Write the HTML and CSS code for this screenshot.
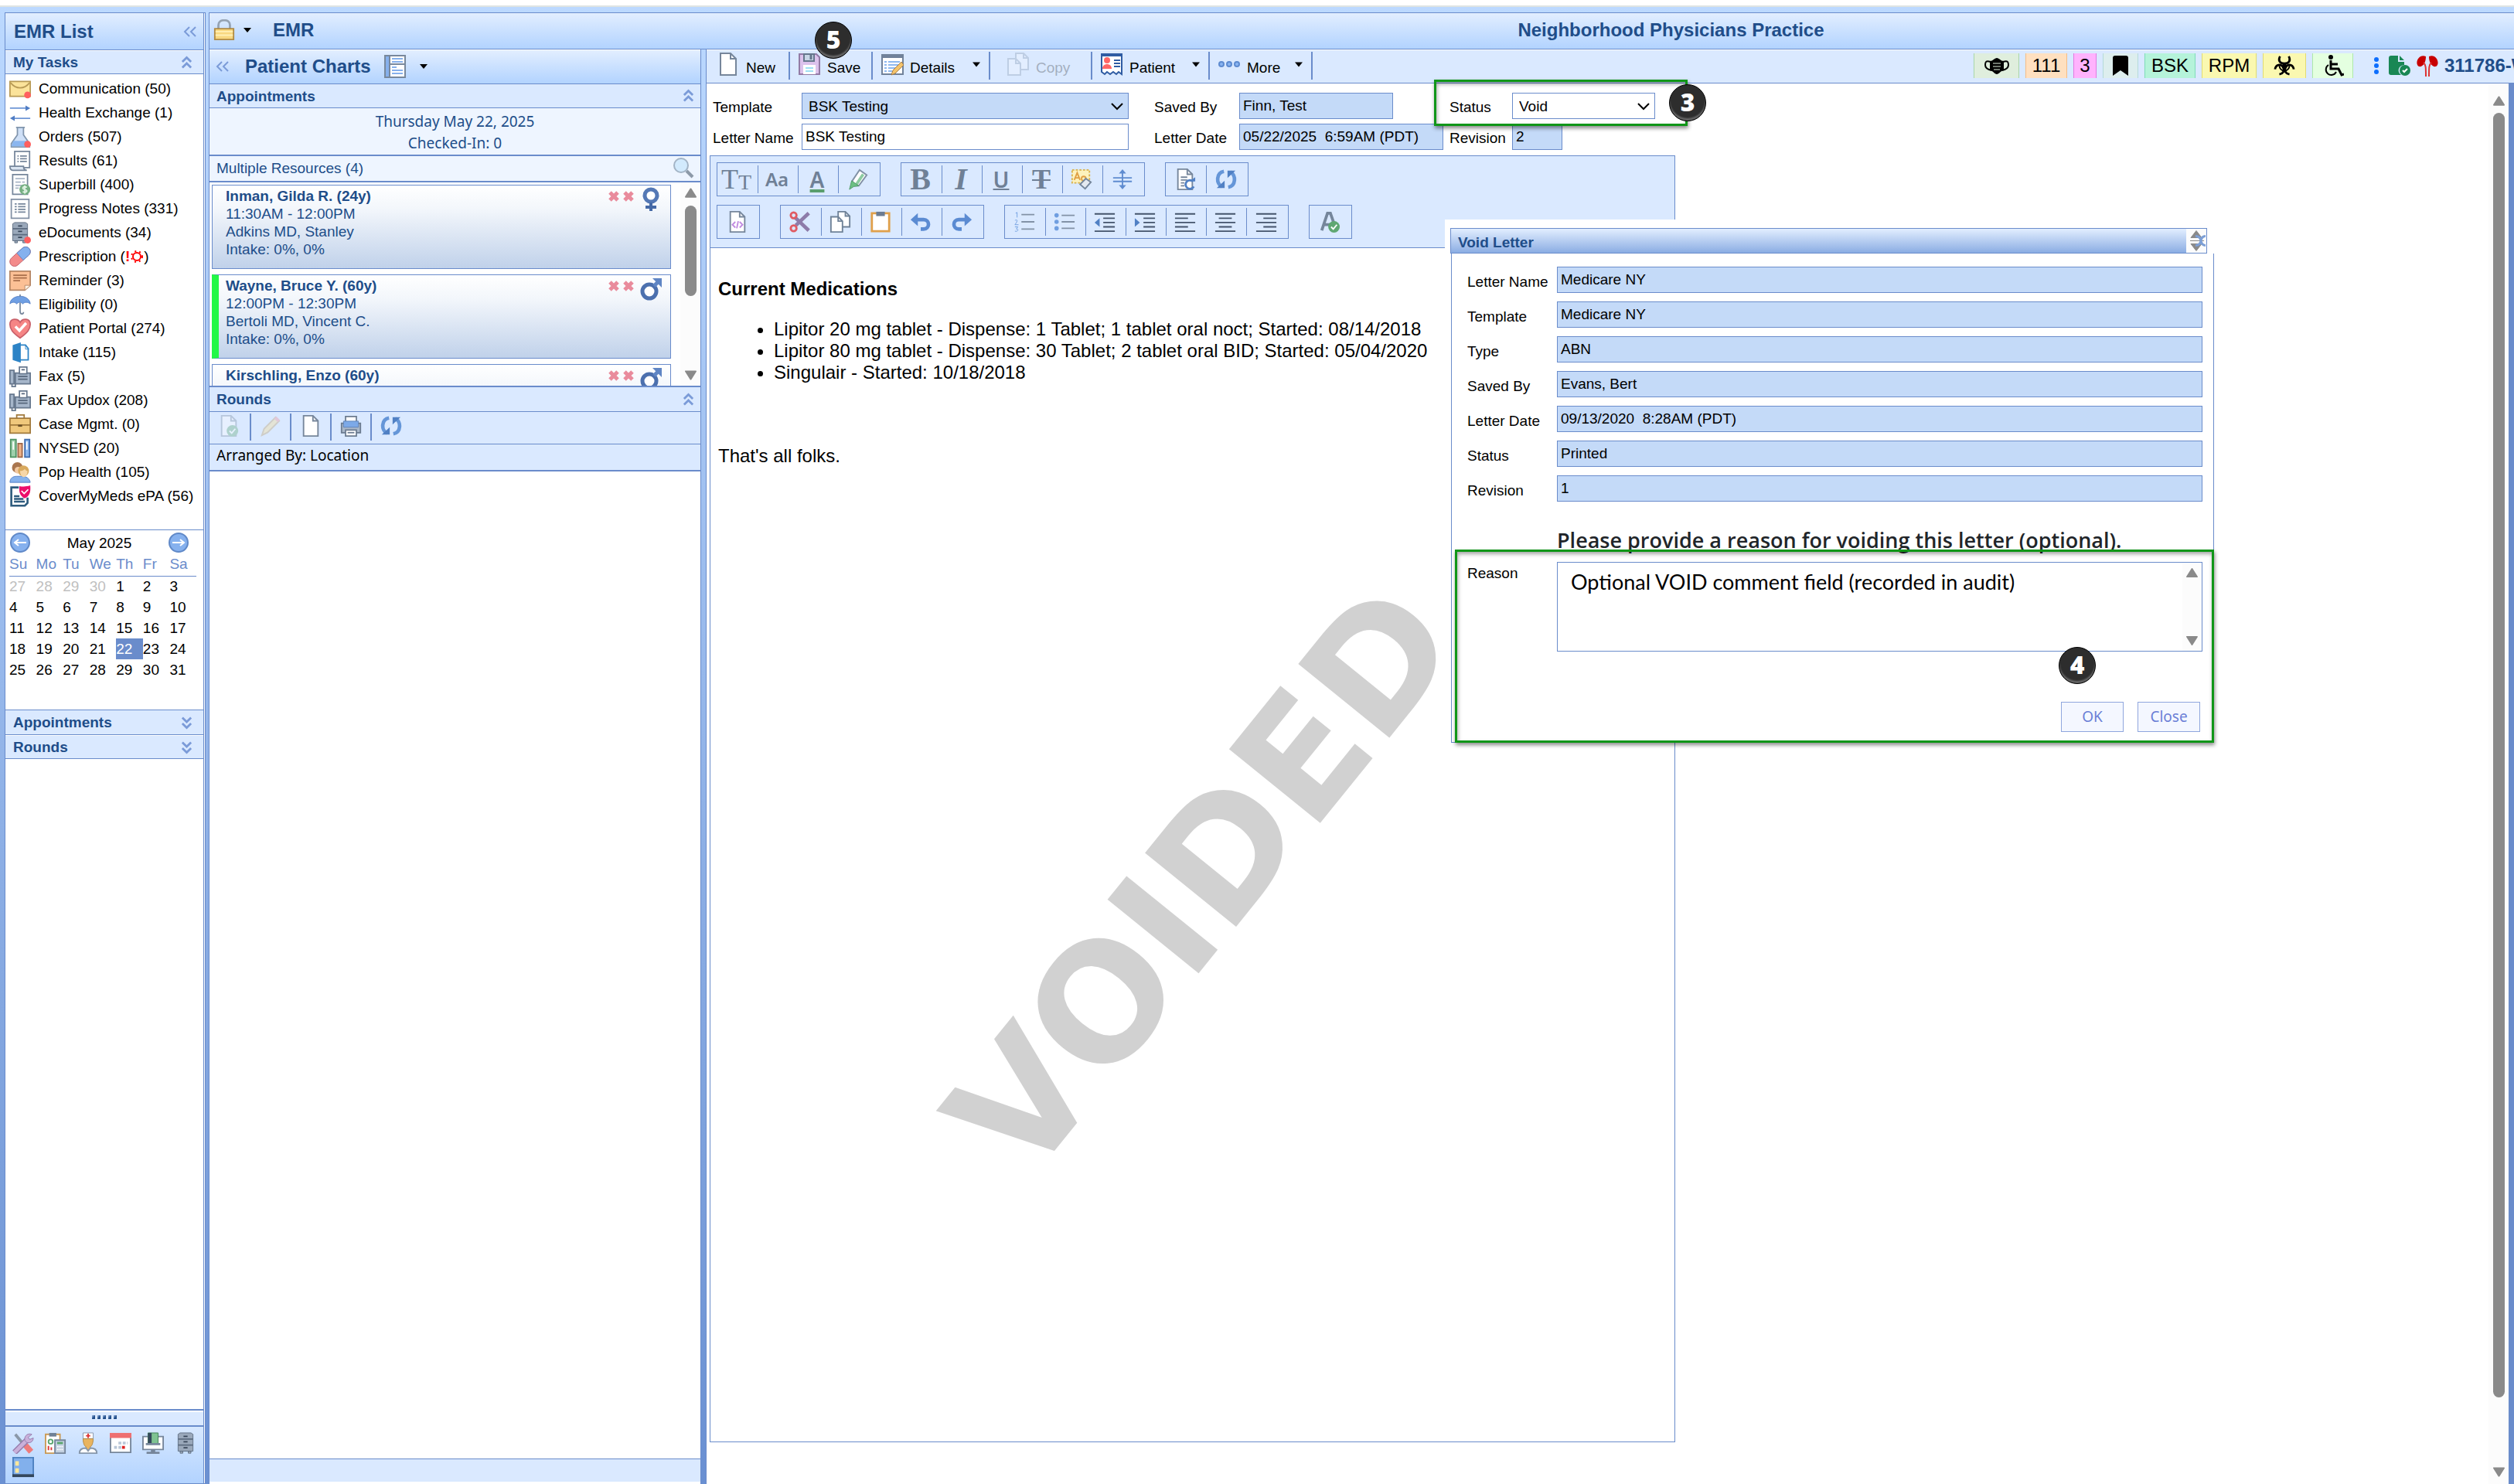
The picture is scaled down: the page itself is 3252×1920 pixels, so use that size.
FILE: index.html
```html
<!DOCTYPE html>
<html lang="en">
<head>
<meta charset="utf-8">
<title>EMR - Neighborhood Physicians Practice</title>
<link rel="stylesheet" href="styles.css">
</head>
<body>
<svg class="sprite" aria-hidden="true">
  <symbol id="mail" viewBox="0 0 32 32"><path d="M1 5h30v22H1z" fill="#fbe39a" stroke="#b89a55" stroke-width="2"/><path d="M2 7c8 10 20 10 28 0" fill="none" stroke="#b89a55" stroke-width="2"/><circle cx="27" cy="25" r="5" fill="#ff5f5f"/></symbol>
  <symbol id="exchange" viewBox="0 0 32 32"><path d="M1 9h26M5 24h26" stroke="#6f97d6" stroke-width="2"/><path d="M24 5l7 4-7 4zM8 20l-7 4 7 4z" fill="#4f7cc4"/></symbol>
  <symbol id="flask" viewBox="0 0 32 32"><path d="M10 2h13M12 2v11L3 26v5h27v-5l-9-13V2z" fill="#cfe0f7" stroke="#8195ad" stroke-width="2"/><path d="M6 22h20l3 8H3z" fill="#8bb6ef"/><circle cx="27" cy="27" r="5" fill="#ff5f5f"/></symbol>
  <symbol id="scroll" viewBox="0 0 32 32"><path d="M8 2h22v24H8z" fill="#fff" stroke="#76869b" stroke-width="2"/><path d="M1 24h20c0 4 2 6 5 6H5c-3 0-4-3-4-6z" fill="#dbe5f1" stroke="#76869b" stroke-width="2"/><path d="M12 9h2m2 0h10M12 13h2m2 0h10M12 17h2m2 0h10" stroke="#76869b" stroke-width="2"/></symbol>
  <symbol id="bill" viewBox="0 0 32 32"><path d="M5 1h22v29H5z" fill="#fff" stroke="#76869b" stroke-width="2"/><path d="M9 7h14M9 12h8m2 0h4M9 17h14M9 21h5" stroke="#a9b6c6" stroke-width="2"/><circle cx="23" cy="23" r="8" fill="#76b083"/><path d="M26 20c-3-2-6-1-6 1s6 2 6 4-4 3-6 1M23 17v12" fill="none" stroke="#e3f4e6" stroke-width="2"/></symbol>
  <symbol id="note" viewBox="0 0 32 32"><path d="M3 2h26v28H3z" fill="#fff" stroke="#8391a5" stroke-width="2"/><path d="M8 9h3m2 0h11M8 13h3m2 0h11M8 17h3m2 0h11M8 21h3m2 0h11" stroke="#76869b" stroke-width="2"/></symbol>
  <symbol id="cabinet" viewBox="0 0 32 32"><path d="M5 3l3-2h16l3 2v25H5zM8 28h4v3H8zm12 0h4v3h-4z" fill="#9aa8ba" stroke="#5c6b7f"/><path d="M5 10h22M5 19h22" stroke="#5c6b7f" stroke-width="2"/><path d="M13 6h6M13 14h6M13 23h6" stroke="#38465a" stroke-width="2"/></symbol>
  <symbol id="cabinet-new" viewBox="0 0 32 32"><use href="#cabinet"/><circle cx="27" cy="27" r="5" fill="#ff5f5f"/></symbol>
  <symbol id="pill" viewBox="0 0 32 32"><g transform="rotate(-42 16 16)"><rect x="-2" y="9" width="36" height="14" rx="7" fill="#f38b8b" stroke="#c05f6a"/><path d="M16 9h11a7 7 0 0 1 0 14H16z" fill="#84b1ee" stroke="#5b86c7"/></g></symbol>
  <symbol id="memo" viewBox="0 0 32 32"><path d="M1 2h30v21l-8 7H1z" fill="#fcc095" stroke="#b58665" stroke-width="2"/><path d="M6 8h20M6 12h20M6 16h10" stroke="#a96f4b" stroke-width="2"/><path d="M31 23h-8v7" fill="#fff0e0" stroke="#b58665"/></symbol>
  <symbol id="umbrella" viewBox="0 0 32 32"><path d="M1 15C2 0 30 0 31 15c-4-3-8-3-11 0-3-3-6-3-9 0-3-3-7-3-10 0z" fill="#6f9fe3" stroke="#4f7cc4"/><path d="M16 13v13c0 5 5 5 5 1M16 1v3" fill="none" stroke="#76869b" stroke-width="2"/></symbol>
  <symbol id="heart" viewBox="0 0 32 32"><path d="M16 30C5 22 1 17 1 10 1 1 12 0 16 7c4-7 15-6 15 3 0 7-4 12-15 20z" fill="#f58585" stroke="#c9606a" stroke-width="2"/><path d="M9 13l6 6 10-11" fill="none" stroke="#fff" stroke-width="4"/></symbol>
  <symbol id="door" viewBox="0 0 32 32"><path d="M14 5h10l4 5v17H14z" fill="#fff" stroke="#2c83c6" stroke-width="2"/><path d="M5 5l12-4v30L5 27z" fill="#2c83c6"/><path d="M24 5v6h5" fill="none" stroke="#2c83c6"/></symbol>
  <symbol id="fax" viewBox="0 0 32 32"><path d="M1 7h6v20H1zM9 11h22v16H9z" fill="#a6b6ca" stroke="#67788e" stroke-width="2"/><path d="M15 2h11v10H15z" fill="#fff" stroke="#67788e" stroke-width="2"/><path d="M18 6h5M13 16h14M13 20h14" stroke="#57677c" stroke-width="2"/><path d="M4 27v4h5v-5" fill="none" stroke="#67788e" stroke-width="2"/></symbol>
  <symbol id="case" viewBox="0 0 32 32"><path d="M1 7h30v22H1z" fill="#f0c87c" stroke="#a17a3d" stroke-width="2"/><path d="M11 7V2h11v5M1 17h30" fill="none" stroke="#a17a3d" stroke-width="2"/><path d="M13 18h6" stroke="#6c5026" stroke-width="3"/></symbol>
  <symbol id="books" viewBox="0 0 32 32"><path d="M2 3h8v26H2z" fill="#9ed0ac" stroke="#4c9262" stroke-width="2"/><path d="M13 9h6v20h-6z" fill="#efb289" stroke="#9d6749" stroke-width="2"/><path d="M23 3h7v26h-7z" fill="#8bb6ef" stroke="#3f6cae" stroke-width="2"/><path d="M6 6v12M26 6v12" stroke="#fff" stroke-width="2"/></symbol>
  <symbol id="people" viewBox="0 0 32 32"><path d="M1 31c0-6 4-9 10-9h8c6 0 11 3 12 9z" fill="#86b2ec" stroke="#4f7cc4"/><circle cx="12" cy="9" r="8" fill="#a9764f"/><circle cx="13" cy="13" r="5" fill="#f2c9a2"/><circle cx="21" cy="14" r="8" fill="#d8a95e"/><path d="M16 14c3 0 5-1 7-3 1 2 3 3 4 3 0 12-11 12-11 0z" fill="#f7d7a8"/></symbol>
  <symbol id="cover" viewBox="0 0 32 32"><path d="M14 3H3v27h20l4-4v-8" fill="#fff" stroke="#2e5b7d" stroke-width="3"/><path d="M7 16h8M7 20h14M7 24h16" stroke="#2e5b7d" stroke-width="3"/><path d="M15 1c5 1 10 1 16-1 1 10-1 16-8 19-7-3-9-9-8-18z" fill="#ec0f6b"/><path d="M18 8l4 4 6-6" fill="none" stroke="#fff" stroke-width="2"/></symbol>
  <symbol id="arrow-l" viewBox="0 0 28 28"><circle cx="14" cy="14" r="12" fill="#86b1ee" stroke="#6089c8" stroke-width="2"/><path d="M22 14H8m4-4l-5 4 5 4" fill="none" stroke="#fff" stroke-width="2"/></symbol>
  <symbol id="arrow-r" viewBox="0 0 28 28"><circle cx="14" cy="14" r="12" fill="#86b1ee" stroke="#6089c8" stroke-width="2"/><path d="M6 14h14m-4-4l5 4-5 4" fill="none" stroke="#fff" stroke-width="2"/></symbol>
  <symbol id="up2" viewBox="0 0 16 18"><path d="M2 8l6-6 6 6M2 16l6-6 6 6" fill="none" stroke="#7b9bd8" stroke-width="3"/></symbol>
  <symbol id="down2" viewBox="0 0 16 18"><path d="M2 2l6 6 6-6M2 10l6 6 6-6" fill="none" stroke="#7b9bd8" stroke-width="3"/></symbol>
  <symbol id="left2" viewBox="0 0 18 16"><path d="M8 2L2 8l6 6M16 2l-6 6 6 6" fill="none" stroke="#7b9bd8" stroke-width="2"/></symbol>
  <symbol id="lock" viewBox="0 0 28 30"><path d="M6 13V8c0-9 16-9 16 0v5" fill="none" stroke="#95a3b3" stroke-width="3"/><path d="M1 13h26v15H1z" fill="#f8d880" stroke="#b08b45" stroke-width="2"/><path d="M2 17h24M2 22h24" stroke="#fff0b5" stroke-width="2"/></symbol>
  <symbol id="chart" viewBox="0 0 30 30"><path d="M2 1h26v28H2z" fill="#fff" stroke="#78889c" stroke-width="2"/><path d="M3 2h5v26H3z" fill="#86b0ec"/><path d="M8 1v28M8 12h20" stroke="#78889c" stroke-width="2"/><path d="M11 5h14M11 9h14M11 16h6M11 20h14M11 24h14" stroke="#86b0ec" stroke-width="2"/></symbol>
  <symbol id="caret" viewBox="0 0 10 6"><path d="M0 0h10L5 6z" fill="#000"/></symbol>
  <symbol id="chevron" viewBox="0 0 16 10"><path d="M1 1l7 7 7-7" fill="none" stroke="#000" stroke-width="2"/></symbol>
  <symbol id="tri-up" viewBox="0 0 16 14"><path d="M8 1L1 12h14z" fill="#8a8a8a" stroke="#8a8a8a" stroke-width="2" stroke-linejoin="round"/></symbol>
  <symbol id="tri-down" viewBox="0 0 16 14"><path d="M8 13L1 2h14z" fill="#8a8a8a" stroke="#8a8a8a" stroke-width="2" stroke-linejoin="round"/></symbol>
  <symbol id="search" viewBox="0 0 28 28"><path d="M18 18l8 8" stroke="#8d9aa8" stroke-width="4"/><circle cx="11" cy="11" r="9" fill="#d2eafd" stroke="#a3b4c6" stroke-width="2"/></symbol>
  <symbol id="x-red" viewBox="0 0 16 16"><path d="M3 3l10 10M13 3L3 13" stroke="#e98b9c" stroke-width="5"/></symbol>
  <symbol id="female" viewBox="0 0 28 32"><circle cx="14" cy="11" r="8" fill="#fff" stroke="#5478b5" stroke-width="5"/><path d="M14 20v11M7 26h14" stroke="#4569a6" stroke-width="4"/></symbol>
  <symbol id="male" viewBox="0 0 28 32"><circle cx="12" cy="19" r="9" fill="#fff" stroke="#4c70ae" stroke-width="5"/><path d="M18 12l6-6" stroke="#5f85c4" stroke-width="5"/><path d="M16 2h12v12z" fill="#5f85c4"/></symbol>
  <symbol id="page" viewBox="0 0 30 30"><path d="M5 1h13l7 7v21H5z" fill="#fff" stroke="#76869b" stroke-width="2"/><path d="M18 1v7h7" fill="none" stroke="#76869b" stroke-width="2"/></symbol>
  <symbol id="page-ok" viewBox="0 0 30 30"><use href="#page"/><circle cx="20" cy="22" r="8" fill="#5fa772"/><path d="M16 22l3 3 5-6" fill="none" stroke="#fff" stroke-width="2"/></symbol>
  <symbol id="pencil" viewBox="0 0 30 30"><path d="M3 28l3-9L22 3l5 5-16 16z" fill="#f7dc8b" stroke="#b99b63" stroke-width="2"/><path d="M20 5l3-3 5 5-3 3z" fill="#ee8c97"/></symbol>
  <symbol id="printer" viewBox="0 0 32 32"><path d="M2 12h28v14H2z" fill="#a9b7c8" stroke="#6b7b8f" stroke-width="2"/><path d="M8 2h16v10H8z" fill="#fff" stroke="#6b7b8f" stroke-width="2"/><path d="M5 9h22v9H5z" fill="#7ca9e8" stroke="#5b7fb5"/><path d="M8 22h16v9H8z" fill="#fff" stroke="#6b7b8f" stroke-width="2"/><path d="M11 26h10" stroke="#6b7b8f" stroke-width="2"/></symbol>
  <symbol id="refresh" viewBox="0 0 30 30"><path d="M12 4C1 6 1 21 9 25M18 26c11-2 11-17 3-21" fill="none" stroke="#6596d8" stroke-width="5"/><path d="M2 27h11V17zM28 3H17v10z" fill="#5080c4"/></symbol>
  <symbol id="disk" viewBox="0 0 30 30"><path d="M2 2h22l4 4v22H2z" fill="#dcc2ec" stroke="#927ba5" stroke-width="2"/><path d="M8 2h13v9H8z" fill="#c8d6e6" stroke="#66778c" stroke-width="2"/><path d="M17 3v6" stroke="#66778c" stroke-width="3"/><path d="M7 16h16v12H7z" fill="#fff"/><path d="M10 20h10M10 24h10" stroke="#9fe0f4" stroke-width="2"/></symbol>
  <symbol id="details" viewBox="0 0 30 30"><path d="M2 3h27v25H2z" fill="#fff" stroke="#71829a" stroke-width="2"/><path d="M1 2h29v5H1z" fill="#71829a"/><path d="M5 12h3m2 0h15M5 16h3m2 0h15M5 20h3m2 0h10M5 24h3m2 0h5" stroke="#8fb9f0" stroke-width="2"/><path d="M14 29l2-6 11-11 3 4-11 11z" fill="#f4c46b" stroke="#a57c4a"/></symbol>
  <symbol id="copy" viewBox="0 0 30 30"><path d="M12 1h10l6 6v15H12z" fill="#fff" stroke="#6f8298" stroke-width="2"/><path d="M2 8h10l6 6v15H2z" fill="#fff" stroke="#6f8298" stroke-width="2"/><path d="M22 1v6h6M12 8v6h6" fill="none" stroke="#6f8298" stroke-width="2"/></symbol>
  <symbol id="patient" viewBox="0 0 30 30"><path d="M2 3h26v25l-4-3-3 3-4-3-4 3-4-3-3 3-4-3z" fill="#fff" stroke="#2f5ca3" stroke-width="2"/><path d="M1 3h28" stroke="#2f5ca3" stroke-width="4"/><circle cx="9" cy="10" r="4" fill="#f66"/><path d="M3 21c0-8 12-8 12 0z" fill="#f66"/><path d="M18 10h8M18 14h8M18 18h8" stroke="#2f5ca3" stroke-width="2"/></symbol>
  <symbol id="dots" viewBox="0 0 30 30"><g fill="#8ab5f2" stroke="#5e8bd0" stroke-width="2"><circle cx="5" cy="15" r="3"/><circle cx="15" cy="15" r="3"/><circle cx="25" cy="15" r="3"/></g></symbol>
  <symbol id="mask" viewBox="0 0 32 24"><path d="M7 6c4 0 6-4 9-4s5 4 9 4v12c-5 1-6 5-9 5s-4-4-9-5z"/><path d="M8 7C2 5 1 7 1 11s3 6 8 7M24 7c6-2 7 0 7 4s-3 6-8 7" fill="none" stroke="#000" stroke-width="2"/><path d="M11 9h10M11 13h10M12 17h8" stroke="#dfeedd" stroke-width="1"/></symbol>
  <symbol id="bookmark" viewBox="0 0 20 26"><path d="M0 3q0-3 3-3h14q3 0 3 3v23l-10-7-10 7z"/></symbol>
  <symbol id="biohazard" viewBox="0 0 30 28"><g fill="none" stroke="#000" stroke-width="3"><path d="M9 1c-3 5-1 10 6 10s9-5 6-10"/><path d="M2 19c1-7 8-8 11-3s0 9-5 10"/><path d="M28 19c-1-7-8-8-11-3s0 9 5 10"/></g><circle cx="15" cy="14" r="3"/><path d="M8 14a7 7 0 0 0 14 0" fill="none" stroke="#000" stroke-width="2"/></symbol>
  <symbol id="wheelchair" viewBox="0 0 28 28"><circle cx="11" cy="3" r="3"/><path d="M11 7v11h10l4 8 3-1M11 12h9" fill="none" stroke="#000" stroke-width="3"/><path d="M8 13a7 7 0 1 0 10 9" fill="none" stroke="#000" stroke-width="2"/></symbol>
  <symbol id="doc-ok" viewBox="0 0 28 28"><path d="M3 1h9v8h8v4c-9 1-9 10-4 13H3q-3 0-3-3V4q0-3 3-3zM14 1l6 6h-6z" fill="#198754"/><circle cx="21" cy="20" r="7" fill="#198754"/><path d="M18 20l2 2 4-4" fill="none" stroke="#fff" stroke-width="2"/></symbol>
  <symbol id="kidneys" viewBox="0 0 28 28"><path d="M12 2C2-2-3 12 3 15c4 1 9-3 9-13zM16 2c10-4 15 10 9 13-4 1-9-3-9-13z" fill="#c80000"/><path d="M9 10c3 3 3 6 3 18M19 10c-3 3-3 6-3 18" fill="none" stroke="#d33" stroke-width="2"/></symbol>
  <symbol id="marker" viewBox="0 0 30 30"><path d="M7 17L17 2l10 7-11 15H8z" fill="#fff" stroke="#8191a5" stroke-width="2"/><path d="M12 23L22 8" stroke="#8ccba0" stroke-width="4"/><path d="M6 17l10 7-7 1-6 4z" fill="#6cc083" stroke="#4f9a67"/></symbol>
  <symbol id="clearfmt" viewBox="0 0 30 30"><path d="M2 2h24v18H2z" fill="#fdf2bd" stroke="#d9b24d" stroke-width="2" stroke-dasharray="3 2"/><path d="M5 16l4-10 4 10M6 13h6" fill="none" stroke="#e0a045" stroke-width="2"/><circle cx="18" cy="14" r="3" fill="none" stroke="#e0a045" stroke-width="2"/><path d="M13 22l8-8 7 5-8 9z" fill="#e4e9f0" stroke="#75869b" stroke-width="2"/></symbol>
  <symbol id="vspace" viewBox="0 0 30 30"><path d="M2 13h26M2 18h26M15 4v22" stroke="#5f8cd0" stroke-width="2"/><path d="M10 7l5-6 5 6zM10 23l5 6 5-6z" fill="#5f8cd0"/></symbol>
  <symbol id="page-sync" viewBox="0 0 30 30"><use href="#page"/><path d="M9 12h9M9 16h9M9 20h5M9 24h5" stroke="#76869b" stroke-width="2"/><path d="M26 18a6 6 0 1 0 1 7" fill="none" stroke="#5080c4" stroke-width="3"/><path d="M21 18h8v-6z" fill="#5080c4"/></symbol>
  <symbol id="page-code" viewBox="0 0 30 30"><use href="#page"/><path d="M12 15l-4 4 4 4M18 15l4 4-4 4M16 14l-2 10" fill="none" stroke="#c08be0" stroke-width="2"/></symbol>
  <symbol id="cut" viewBox="0 0 30 30"><path d="M27 3L9 20M27 27L8 9" stroke="#8d7ba9" stroke-width="5"/><circle cx="6" cy="6" r="4" fill="none" stroke="#e05a62" stroke-width="3"/><circle cx="6" cy="24" r="4" fill="none" stroke="#e05a62" stroke-width="3"/></symbol>
  <symbol id="paste" viewBox="0 0 30 30"><path d="M3 3h24v25H3z" fill="#fff" stroke="#e0a04a" stroke-width="3"/><path d="M9 1h12v6H9z" fill="#6b7c92"/></symbol>
  <symbol id="undo" viewBox="0 0 30 30"><path d="M6 12h13c9 0 9 13 0 13h-4" fill="none" stroke="#5b8bd2" stroke-width="5"/><path d="M11 3v18L1 12z" fill="#5b8bd2"/></symbol>
  <symbol id="redo" viewBox="0 0 30 30"><path d="M24 12H11c-9 0-9 13 0 13h4" fill="none" stroke="#5b8bd2" stroke-width="5"/><path d="M19 3v18l10-9z" fill="#5b8bd2"/></symbol>
  <symbol id="ol" viewBox="0 0 30 30"><path d="M11 5h18M11 15h18M11 25h18" stroke="#8292a6" stroke-width="2"/><path d="M3 3l2-1v7M2 13c4-2 4 1 0 6h5M2 22h4l-2 3c4 0 2 4-2 3" fill="none" stroke="#6f9ee0" stroke-width="1"/></symbol>
  <symbol id="ul" viewBox="0 0 30 30"><path d="M11 6h18M11 15h18M11 24h18" stroke="#8292a6" stroke-width="2"/><g fill="#6f9ee0"><circle cx="4" cy="6" r="3"/><circle cx="4" cy="15" r="3"/><circle cx="4" cy="24" r="3"/></g></symbol>
  <symbol id="outdent" viewBox="0 0 30 30"><path d="M1 4h28M13 10h16M13 16h16M13 22h16M1 28h28" stroke="#44546b" stroke-width="2"/><path d="M8 10v12l-7-6z" fill="#5080c4"/></symbol>
  <symbol id="indent" viewBox="0 0 30 30"><path d="M1 4h28M13 10h16M13 16h16M13 22h16M1 28h28" stroke="#44546b" stroke-width="2"/><path d="M1 10v12l7-6z" fill="#5080c4"/></symbol>
  <symbol id="al-left" viewBox="0 0 30 30"><path d="M1 4h28M1 10h18M1 16h28M1 22h18M1 28h28" stroke="#44546b" stroke-width="2"/></symbol>
  <symbol id="al-center" viewBox="0 0 30 30"><path d="M1 4h28M6 10h18M1 16h28M6 22h18M1 28h28" stroke="#44546b" stroke-width="2"/></symbol>
  <symbol id="al-right" viewBox="0 0 30 30"><path d="M1 4h28M11 10h18M1 16h28M11 22h18M1 28h28" stroke="#44546b" stroke-width="2"/></symbol>
  <symbol id="spell" viewBox="0 0 30 30"><path d="M4 27L12 3h4l7 20M8 19h10" fill="none" stroke="#75869b" stroke-width="4"/><circle cx="21" cy="22" r="8" fill="#5fa772"/><path d="M17 22l3 3 5-6" fill="none" stroke="#fff" stroke-width="2"/></symbol>
  <symbol id="tools" viewBox="0 0 30 30"><path d="M4 3l20 24" stroke="#8a98a8" stroke-width="4"/><path d="M18 18l8 9" stroke="#ee7b7b" stroke-width="8"/><path d="M3 28L20 11" stroke="#957aab" stroke-width="8"/><path d="M3 28L20 11" stroke="#c9b0da" stroke-width="5"/><path d="M27 3l-5 4 2 3 5-2c0 8-11 9-12 2 0-6 5-9 10-7z" fill="#c9b0da" stroke="#957aab"/></symbol>
  <symbol id="calc" viewBox="0 0 30 30"><path d="M1 3h20v26H1z" fill="#fff" stroke="#c99a55" stroke-width="2"/><path d="M6 1h10v5H6z" fill="#6f8095"/><circle cx="8" cy="13" r="3" fill="none" stroke="#5aa56e" stroke-width="2"/><path d="M5 19v6M9 21v4" stroke="#d33" stroke-width="2"/><path d="M14 11h14v18H14z" fill="#c3d0e0" stroke="#76869b" stroke-width="2"/><path d="M17 15h8" stroke="#5aa56e" stroke-width="3"/><path d="M17 20h8M17 24h8" stroke="#fff" stroke-width="2" stroke-dasharray="2 1"/></symbol>
  <symbol id="nurse" viewBox="0 0 30 30"><path d="M8 1h14v8H8z" fill="#fff" stroke="#8797ab"/><path d="M15 2v6M12 5h6" stroke="#d33" stroke-width="2"/><path d="M8 9h14c0 8-3 11-4 11v5h-6v-5c-1 0-4-3-4-11z" fill="#e9b45f" stroke="#b28842"/><path d="M3 29c0-6 5-7 9-7l3 4 3-4c4 0 9 1 9 7z" fill="#fff" stroke="#8797ab" stroke-width="2"/></symbol>
  <symbol id="calendar" viewBox="0 0 30 30"><path d="M1 2h28v26H1z" fill="#fff" stroke="#76869b" stroke-width="2"/><path d="M0 1h30v7H0z" fill="#ee6f70"/><path d="M12 15h13M6 21h10" stroke="#b8c6d8" stroke-width="4" stroke-dasharray="4 2"/><path d="M17 19h4v4h-4z" fill="#d22"/></symbol>
  <symbol id="monitor" viewBox="0 0 30 30"><path d="M1 6h28v18H1z" fill="#fff" stroke="#76869b" stroke-width="2"/><path d="M8 1h14v15H8z" fill="#7fc392" stroke="#3d7f54"/><path d="M8 1h5v15H8z" fill="#34485a"/><path d="M5 15h20v3H5zM12 24h6v3h6v3H6v-3h6z" fill="#76869b"/></symbol>
  <symbol id="server" viewBox="0 0 30 30"><path d="M1 2h28v26H1z" fill="#82b0ec" stroke="#4d81c0" stroke-width="2"/><path d="M4 7h5v6H4zM4 17h5v6H4z" fill="#ffe79a"/><path d="M0 25h30v4H0z" fill="#33475c"/></symbol>
</svg>

<div class="top-strip"></div>
<div class="shell">
  <nav class="sidebar" aria-label="EMR List">
    <header class="title-bar side-title"><h2>EMR List</h2><svg class="chev-l"><use href="#left2"/></svg></header>
    <section class="side-bar"><h3>My Tasks</h3><svg class="chev"><use href="#up2"/></svg></section>
    <ul class="tasks">
      <li><a href="#"><svg><use href="#mail"/></svg>Communication (50)</a></li>
      <li><a href="#"><svg><use href="#exchange"/></svg>Health Exchange (1)</a></li>
      <li><a href="#"><svg><use href="#flask"/></svg>Orders (507)</a></li>
      <li><a href="#"><svg><use href="#scroll"/></svg>Results (61)</a></li>
      <li><a href="#"><svg><use href="#bill"/></svg>Superbill (400)</a></li>
      <li><a href="#"><svg><use href="#note"/></svg>Progress Notes (331)</a></li>
      <li><a href="#"><svg><use href="#cabinet-new"/></svg>eDocuments (34)</a></li>
      <li><a href="#"><svg><use href="#pill"/></svg>Prescription (<b class="alert">!</b><svg class="gear" viewBox="0 0 18 18"><circle cx="9" cy="9" r="5" fill="none" stroke="red" stroke-width="2"/><circle cx="9" cy="9" r="7" fill="none" stroke="red" stroke-width="2" stroke-dasharray="2 4"/></svg>)</a></li>
      <li><a href="#"><svg><use href="#memo"/></svg>Reminder (3)</a></li>
      <li><a href="#"><svg><use href="#umbrella"/></svg>Eligibility (0)</a></li>
      <li><a href="#"><svg><use href="#heart"/></svg>Patient Portal (274)</a></li>
      <li><a href="#"><svg><use href="#door"/></svg>Intake (115)</a></li>
      <li><a href="#"><svg><use href="#fax"/></svg>Fax (5)</a></li>
      <li><a href="#"><svg><use href="#fax"/></svg>Fax Updox (208)</a></li>
      <li><a href="#"><svg><use href="#case"/></svg>Case Mgmt. (0)</a></li>
      <li><a href="#"><svg><use href="#books"/></svg>NYSED (20)</a></li>
      <li><a href="#"><svg><use href="#people"/></svg>Pop Health (105)</a></li>
      <li><a href="#"><svg><use href="#cover"/></svg>CoverMyMeds ePA (56)</a></li>
    </ul>
    <section class="calendar">
      <div class="month">
        <button type="button" aria-label="Previous month"><svg><use href="#arrow-l"/></svg></button>
        <span>May 2025</span>
        <button type="button" aria-label="Next month"><svg><use href="#arrow-r"/></svg></button>
      </div>
      <table>
        <thead><tr><th>Su</th><th>Mo</th><th>Tu</th><th>We</th><th>Th</th><th>Fr</th><th>Sa</th></tr></thead>
        <tbody>
          <tr><td class="off">27</td><td class="off">28</td><td class="off">29</td><td class="off">30</td><td>1</td><td>2</td><td>3</td></tr>
          <tr><td>4</td><td>5</td><td>6</td><td>7</td><td>8</td><td>9</td><td>10</td></tr>
          <tr><td>11</td><td>12</td><td>13</td><td>14</td><td>15</td><td>16</td><td>17</td></tr>
          <tr><td>18</td><td>19</td><td>20</td><td>21</td><td class="today">22</td><td>23</td><td>24</td></tr>
          <tr><td>25</td><td>26</td><td>27</td><td>28</td><td>29</td><td>30</td><td>31</td></tr>
        </tbody>
      </table>
    </section>
    <section class="side-bar folded"><h3>Appointments</h3><svg class="chev"><use href="#down2"/></svg></section>
    <section class="side-bar"><h3>Rounds</h3><svg class="chev"><use href="#down2"/></svg></section>
    <footer class="side-foot">
      <div class="grip"><i></i><i></i><i></i><i></i><i></i></div>
      <div class="launch">
        <button type="button" aria-label="Tools"><svg><use href="#tools"/></svg></button>
        <button type="button" aria-label="Billing"><svg><use href="#calc"/></svg></button>
        <button type="button" aria-label="Clinical"><svg><use href="#nurse"/></svg></button>
        <button type="button" aria-label="Calendar"><svg><use href="#calendar"/></svg></button>
        <button type="button" aria-label="Reports"><svg><use href="#monitor"/></svg></button>
        <button type="button" aria-label="Files"><svg><use href="#cabinet"/></svg></button>
        <button type="button" aria-label="System"><svg><use href="#server"/></svg></button>
      </div>
    </footer>
  </nav>

  <main class="main">
    <header class="title-bar main-title">
      <div class="module"><svg class="lock"><use href="#lock"/></svg><svg class="caret"><use href="#caret"/></svg><h1>EMR</h1></div>
      <h1 class="practice">Neighborhood Physicians Practice</h1>
    </header>
    <div class="columns">
      <aside class="charts">
        <header class="title-bar charts-title"><svg class="chev-l"><use href="#left2"/></svg><h2>Patient Charts</h2><svg class="chart-icon"><use href="#chart"/></svg><svg class="caret"><use href="#caret"/></svg></header>
        <section class="pane-bar"><h3>Appointments</h3><svg class="chev"><use href="#up2"/></svg></section>
        <div class="day"><span>Thursday May 22, 2025</span><span>Checked-In: 0</span></div>
        <div class="resources"><span>Multiple Resources (4)</span><svg><use href="#search"/></svg></div>
        <div class="visits">
          <div class="cards">
            <article class="card">
              <p><b>Inman, Gilda R. (24y)</b><br>11:30AM - 12:00PM<br>Adkins MD, Stanley<br>Intake: 0%, 0%</p>
              <div class="flags"><svg class="x"><use href="#x-red"/></svg><svg class="x"><use href="#x-red"/></svg><svg class="sex"><use href="#female"/></svg></div>
            </article>
            <article class="card here">
              <p><b>Wayne, Bruce Y. (60y)</b><br>12:00PM - 12:30PM<br>Bertoli MD, Vincent C.<br>Intake: 0%, 0%</p>
              <div class="flags"><svg class="x"><use href="#x-red"/></svg><svg class="x"><use href="#x-red"/></svg><svg class="sex"><use href="#male"/></svg></div>
            </article>
            <article class="card">
              <p><b>Kirschling, Enzo (60y)</b></p>
              <div class="flags"><svg class="x"><use href="#x-red"/></svg><svg class="x"><use href="#x-red"/></svg><svg class="sex"><use href="#male"/></svg></div>
            </article>
          </div>
          <div class="scroll list-scroll"><svg><use href="#tri-up"/></svg><i class="thumb"></i><svg class="end"><use href="#tri-down"/></svg></div>
        </div>
        <section class="pane-bar rounds-bar"><h3>Rounds</h3><svg class="chev"><use href="#up2"/></svg></section>
        <div class="rounds-tools">
          <button type="button" disabled aria-label="Complete"><svg><use href="#page-ok"/></svg></button>
          <button type="button" disabled aria-label="Edit"><svg><use href="#pencil"/></svg></button>
          <button type="button" aria-label="New"><svg><use href="#page"/></svg></button>
          <button type="button" aria-label="Print"><svg><use href="#printer"/></svg></button>
          <button type="button" aria-label="Refresh"><svg><use href="#refresh"/></svg></button>
        </div>
        <div class="arranged">Arranged By: Location</div>
        <div class="charts-foot"></div>
      </aside>

      <section class="letter">
        <div class="toolbar">
          <button type="button" class="w-new"><svg><use href="#page"/></svg><span>New</span></button>
          <button type="button" class="w-save"><svg><use href="#disk"/></svg><span>Save</span></button>
          <button type="button" class="w-menu"><svg><use href="#details"/></svg><span>Details</span><svg class="caret"><use href="#caret"/></svg></button>
          <button type="button" class="w-copy" disabled><svg><use href="#copy"/></svg><span>Copy</span></button>
          <button type="button" class="w-menu"><svg><use href="#patient"/></svg><span>Patient</span><svg class="caret"><use href="#caret"/></svg></button>
          <button type="button" class="w-more"><svg><use href="#dots"/></svg><span>More</span><svg class="caret"><use href="#caret"/></svg></button>
          <div class="patient-flags">
            <span class="chip mask"><svg viewBox="0 0 32 24"><use href="#mask"/></svg></span>
            <span class="chip orange">111</span>
            <span class="chip pink">3</span>
            <span class="chip mark"><svg><use href="#bookmark"/></svg></span>
            <span class="chip mint">BSK</span>
            <span class="chip yellow">RPM</span>
            <span class="chip yellow"><svg><use href="#biohazard"/></svg></span>
            <span class="chip pale"><svg><use href="#wheelchair"/></svg></span>
            <span class="kebab"><i></i><i></i><i></i></span>
            <svg class="status-icon"><use href="#doc-ok"/></svg>
            <svg class="status-icon"><use href="#kidneys"/></svg>
            <b class="patient-id">311786-W</b>
          </div>
        </div>
        <div class="work">
          <div class="work-body">
            <form class="meta">
              <label for="tpl">Template</label>
              <span class="picker"><select id="tpl" class="filled"><option>BSK Testing</option></select><svg><use href="#chevron"/></svg></span>
              <label for="saved" class="mid">Saved By</label>
              <input id="saved" class="filled short" value="Finn, Test" readonly>
              <label for="status" class="last">Status</label>
              <span class="picker"><select id="status"><option>Void</option></select><svg><use href="#chevron"/></svg></span>
              <label for="lname">Letter Name</label>
              <input id="lname" value="BSK Testing">
              <label for="ldate" class="mid">Letter Date</label>
              <input id="ldate" class="filled" value="05/22/2025  6:59AM (PDT)" readonly>
              <label for="rev" class="last">Revision</label>
              <input id="rev" class="filled tiny" value="2" readonly>
            </form>
            <div class="editor">
              <div class="edit-tools">
                <div class="tool-row">
                  <div class="group">
                    <button type="button" class="serif"><span class="cap">T</span><span class="small">T</span></button>
                    <button type="button" class="sans">Aa</button>
                    <button type="button" class="sans inked">A</button>
                    <button type="button" aria-label="Highlight"><svg><use href="#marker"/></svg></button>
                  </div>
                  <div class="group">
                    <button type="button" class="serif bold">B</button>
                    <button type="button" class="serif bold italic">I</button>
                    <button type="button" class="sans under">U</button>
                    <button type="button" class="serif strike">T</button>
                    <button type="button" aria-label="Clear formatting"><svg><use href="#clearfmt"/></svg></button>
                    <button type="button" aria-label="Line spacing"><svg><use href="#vspace"/></svg></button>
                  </div>
                  <div class="group">
                    <button type="button" aria-label="Reload template"><svg><use href="#page-sync"/></svg></button>
                    <button type="button" aria-label="Refresh"><svg><use href="#refresh"/></svg></button>
                  </div>
                </div>
                <div class="tool-row">
                  <div class="group"><button type="button" aria-label="Source"><svg><use href="#page-code"/></svg></button></div>
                  <div class="group">
                    <button type="button" aria-label="Cut"><svg><use href="#cut"/></svg></button>
                    <button type="button" aria-label="Copy"><svg><use href="#copy"/></svg></button>
                    <button type="button" aria-label="Paste"><svg><use href="#paste"/></svg></button>
                    <button type="button" aria-label="Undo"><svg><use href="#undo"/></svg></button>
                    <button type="button" aria-label="Redo"><svg><use href="#redo"/></svg></button>
                  </div>
                  <div class="group">
                    <button type="button" aria-label="Numbered list"><svg><use href="#ol"/></svg></button>
                    <button type="button" aria-label="Bulleted list"><svg><use href="#ul"/></svg></button>
                    <button type="button" aria-label="Outdent"><svg><use href="#outdent"/></svg></button>
                    <button type="button" aria-label="Indent"><svg><use href="#indent"/></svg></button>
                    <button type="button" aria-label="Align left"><svg><use href="#al-left"/></svg></button>
                    <button type="button" aria-label="Align center"><svg><use href="#al-center"/></svg></button>
                    <button type="button" aria-label="Align right"><svg><use href="#al-right"/></svg></button>
                  </div>
                  <div class="group"><button type="button" aria-label="Spelling"><svg><use href="#spell"/></svg></button></div>
                </div>
              </div>
              <article class="document">
                <h4>Current Medications</h4>
                <ul>
                  <li>Lipitor 20 mg tablet - Dispense: 1 Tablet; 1 tablet oral noct; Started: 08/14/2018</li>
                  <li>Lipitor 80 mg tablet - Dispense: 30 Tablet; 2 tablet oral BID; Started: 05/04/2020</li>
                  <li>Singulair - Started: 10/18/2018</li>
                </ul>
                <p>That's all folks.</p>
                <div class="watermark">VOIDED</div>
              </article>
            </div>
          </div>
          <div class="scroll page-scroll"><svg><use href="#tri-up"/></svg><i class="thumb"></i><svg class="end"><use href="#tri-down"/></svg></div>
        </div>
      </section>
    </div>
  </main>
</div>

<div class="outline status-outline"></div>
<span class="step step-3">3</span>
<span class="step step-5">5</span>

<section class="dialog" role="dialog" aria-label="Void Letter">
  <header><h2>Void Letter</h2><button type="button" aria-label="Close dialog"><svg viewBox="0 0 26 30"><path d="M6 11h14l-7-9zM6 19h14l-7 9zM5 15h18" fill="#8a8a8a" stroke="#8a8a8a"/><path d="M12 9q6 0 7 6t6 6M25 9q-5 0-6 6t-7 6" fill="none" stroke="#7d9fd6" stroke-width="3"/></svg></button></header>
  <div class="dialog-body">
    <div class="fields">
      <label for="d1">Letter Name</label><input id="d1" class="filled" value="Medicare NY" readonly>
      <label for="d2">Template</label><input id="d2" class="filled" value="Medicare NY" readonly>
      <label for="d3">Type</label><input id="d3" class="filled" value="ABN" readonly>
      <label for="d4">Saved By</label><input id="d4" class="filled" value="Evans, Bert" readonly>
      <label for="d5">Letter Date</label><input id="d5" class="filled" value="09/13/2020  8:28AM (PDT)" readonly>
      <label for="d6">Status</label><input id="d6" class="filled" value="Printed" readonly>
      <label for="d7">Revision</label><input id="d7" class="filled" value="1" readonly>
    </div>
    <p class="prompt">Please provide a reason for voiding this letter (optional).</p>
    <div class="reason">
      <label for="reason">Reason</label>
      <div class="area"><textarea id="reason">Optional VOID comment field (recorded in audit)</textarea><div class="area-scroll"><svg><use href="#tri-up"/></svg><svg><use href="#tri-down"/></svg></div></div>
    </div>
    <div class="actions"><button type="button">OK</button><button type="button">Close</button></div>
  </div>
  <div class="outline reason-outline"></div>
  <span class="step step-4">4</span>
</section>
</body>
</html>
```
FILE: styles.css
```css
:root {
  --line: #6a8ccb;
  --bar: #dae9ff;
  --ink: #204d89;
  --field: #c4daf8;
  --head: linear-gradient(#e2eeff, #b2d3ff);
}
* { box-sizing: border-box; }
body {
  margin: 0;
  position: relative;
  min-height: 100vh;
  display: flex;
  flex-direction: column;
  overflow: hidden;
  background: linear-gradient(#bcd9ff, #6a90d2);
  color: #000;
  font: 19px/23px "Liberation Sans", Arial, sans-serif;
}
h1, h2, h3, h4, p, ul { margin: 0; padding: 0; }
h1, h2 { font-size: 24px; line-height: 28px; color: var(--ink); }
h3 { font-size: 19px; line-height: 23px; color: var(--ink); }
button { font: inherit; color: inherit; background: none; border: 0; padding: 0; margin: 0; }
svg { display: block; flex: none; width: 28px; height: 28px; }
.sprite { position: absolute; width: 0; height: 0; }
.caret { width: 10px; height: 6px; }
.chev { width: 15px; height: 18px; }
.chev-l { width: 18px; height: 16px; }

.top-strip { height: 9px; background: #fff; border-bottom: 2px solid #dfe4e3; }
.shell { flex: 1; display: flex; gap: 4px; padding: 7px 0 0 6px; }

.title-bar { display: flex; align-items: center; padding-bottom: 2px; background: var(--head); border-bottom: 1px solid var(--line); }

/* left navigation */
.sidebar {
  flex: 0 0 259px;
  display: flex;
  flex-direction: column;
  background: #fff;
  border: 1px solid var(--line);
  border-right: 3px double var(--line);
}
.side-title { height: 48px; padding: 0 8px 0 11px; justify-content: space-between; }
.side-bar {
  display: flex;
  align-items: center;
  justify-content: space-between;
  height: 31px;
  padding: 0 14px 0 10px;
  background: var(--bar);
  border-top: 1px solid #fff;
  border-bottom: 1px solid var(--line);
}
.folded { height: 33px; border-top-color: var(--line); }
.tasks { list-style: none; padding: 3px 0 28px 5px; }
.tasks a { display: flex; align-items: center; height: 31px; color: #000; text-decoration: none; white-space: pre; }
.tasks a > svg:first-child { margin-right: 10px; }
.tasks .gear { width: 18px; height: 18px; }
.alert { color: red; }
.calendar { border-top: 1px solid var(--line); padding: 1px 9px 38px 5px; }
.month { display: flex; justify-content: space-between; align-items: center; height: 30px; padding-right: 9px; }
.calendar table { width: 100%; table-layout: fixed; border-collapse: collapse; }
.calendar th { height: 28px; padding: 0 0 2px; font-weight: normal; text-align: left; color: var(--line); border-bottom: 1px solid var(--line); }
.calendar td { height: 27px; padding: 0; }
.calendar .off { color: #c0c0c0; }
.calendar .today { background: #6a8ccb; color: #fff; }
.side-foot { margin-top: auto; border-top: 2px solid var(--line); background: var(--head); }
.grip { display: flex; justify-content: center; gap: 3px; padding: 4px; height: 21px; background: var(--bar); border-top: 2px solid #fff; border-bottom: 2px solid var(--line); }
.grip i { width: 4px; height: 5px; background: linear-gradient(135deg, #9db8e0, #204d89 60%); }
.launch { display: grid; grid-template-columns: repeat(6, 28px); gap: 3px 14px; padding: 7px 9px; }

/* main area */
.main { flex: 1; min-width: 0; display: flex; flex-direction: column; border: solid var(--line); border-width: 1px 0 0 1px; }
.main-title { height: 47px; }
.module { display: flex; align-items: center; flex: 0 0 800px; padding-left: 5px; }
.module .caret { margin: 0 28px 0 11px; }
.practice { flex: 1; text-align: center; }
.columns { flex: 1; display: flex; gap: 6px; }

.charts { flex: 0 0 636px; display: flex; flex-direction: column; background: #fff; border-right: 1px solid var(--line); }
.charts-title { height: 45px; padding-left: 8px; border-top: 1px solid #fff; }
.charts-title h2 { margin: 0 16px 0 20px; }
.charts-title .chart-icon { width: 30px; height: 30px; margin-right: 17px; }
.pane-bar {
  display: flex;
  align-items: center;
  justify-content: space-between;
  height: 31px;
  padding: 0 8px 0 9px;
  background: var(--bar);
  border-bottom: 1px solid var(--line);
}
.day {
  display: flex;
  flex-direction: column;
  align-items: center;
  height: 62px;
  padding-top: 3px;
  background: #eef5ff;
  border-bottom: 2px solid var(--line);
  color: var(--ink);
  font-family: "Noto Sans", sans-serif;
  line-height: 28px;
}
.resources { display: flex; align-items: center; justify-content: space-between; height: 34px; padding: 0 8px 2px 9px; background: #eef5ff; border-bottom: 2px solid var(--line); color: var(--ink); }
.visits { display: flex; justify-content: space-between; height: 263px; overflow: hidden; }
.cards { flex: 0 0 594px; margin: 3px 0 0 3px; }
.card {
  display: flex;
  justify-content: space-between;
  height: 109px;
  margin-bottom: 7px;
  padding: 2px 11px 0 17px;
  border: 1px solid var(--line);
  background: linear-gradient(#fff, #f2f6fb 30%, #c0d1ea);
  color: var(--ink);
}
.here { padding-left: 9px; border-left: 9px solid #22f846; }
.flags { display: flex; gap: 3px; }
.flags .x { width: 16px; height: 16px; margin-top: 4px; }
.flags .sex { width: 28px; height: 32px; margin-left: 4px; }
.scroll { display: flex; flex-direction: column; align-items: center; flex: 0 0 26px; background: #fcfcfc; }
.scroll svg { width: 15px; height: 14px; }
.scroll .thumb { width: 15px; border-radius: 8px; background: #8a8a8a; }
.scroll .end { margin-top: auto; }
.list-scroll { padding: 7px 0; }
.list-scroll .thumb { height: 117px; margin-top: 9px; }
.rounds-bar { height: 34px; border-top: 2px solid var(--line); }
.rounds-tools { display: flex; height: 42px; background: var(--bar); border-bottom: 1px solid var(--line); }
.rounds-tools button { width: 52px; height: 35px; margin-top: 2px; padding: 1px 0 4px 11px; border-right: 2px solid var(--line); }
.rounds-tools button:first-child { width: 54px; }
.rounds-tools button:last-child { border: 0; }
.rounds-tools button:disabled svg { opacity: .35; }
.arranged { height: 35px; padding: 0 9px; line-height: 28px; background: var(--bar); border-bottom: 2px solid var(--line); font-family: "Noto Sans", sans-serif; }
.charts-foot { height: 33px; margin-top: auto; background: var(--bar); border-top: 1px solid var(--line); border-bottom: 3px solid #fff; }

/* letter workspace */
.letter { flex: 1; min-width: 0; display: flex; flex-direction: column; background: #fff; border-left: 1px solid var(--line); }
.toolbar { display: flex; height: 44px; padding-top: 2px; background: var(--bar); border-bottom: 1px solid var(--line); border-top: 1px solid #fff; }
.toolbar button { display: flex; align-items: center; gap: 8px; flex: none; height: 36px; padding-left: 10px; border-right: 2px solid var(--line); }
.toolbar button svg { width: 30px; height: 30px; margin-bottom: 4px; }
.toolbar button span { padding-top: 4px; }
.toolbar .w-new { width: 108px; padding-left: 13px; }
.toolbar .w-save { width: 107px; }
.toolbar .w-menu { width: 152px; }
.toolbar .w-copy { width: 132px; padding-left: 21px; border-color: var(--line); }
.toolbar .w-copy:disabled svg, .toolbar .w-copy:disabled span { opacity: .25; }
.toolbar .w-more { width: 133px; }
.toolbar button .caret { width: 10px; height: 7px; margin: 0 11px 4px auto; }
.patient-flags { display: flex; align-items: center; gap: 8px; height: 33px; margin: 1px 0 0 auto; flex: 0 0 699px; overflow: hidden; font-size: 24px; white-space: nowrap; }
.chip { display: flex; align-items: center; justify-content: center; flex: none; height: 32px; padding: 0 8px; border: solid #a9d6a9; border-width: 0 1px; }
.mask { width: 59px; background: #dfeedd; }
.mask svg { width: 32px; height: 24px; }
.orange { width: 54px; background: #ffe0c0; border-color: #f5bd85; }
.pink { width: 30px; background: #ffb3fd; border-color: #e27ae0; }
.mark { width: 46px; background: #ddeeee; border-color: #b5dada; }
.mark svg { width: 20px; height: 26px; }
.mint { width: 66px; background: #b5f3da; border-color: #7fdcb8; }
.yellow { width: 71px; background: #faf8b0; border-color: #e3dc70; }
.yellow:has(svg) { width: 56px; }
.pale { width: 53px; background: #e4ffe0; border-color: #aee8a8; }
.kebab { display: flex; flex-direction: column; gap: 2px; margin: 0 5px 0 19px; }
.kebab i { width: 6px; height: 6px; border-radius: 3px; background: #0d6efd; }
.patient-id { color: var(--ink); }

.work { flex: 1; display: flex; border-right: 7px solid var(--line); }
.work-body { flex: 1; min-width: 0; display: flex; flex-direction: column; padding-bottom: 54px; }
.meta {
  display: grid;
  grid-template-columns: 115px 423px 143px 264px 89px 185px;
  grid-auto-rows: 34px;
  row-gap: 6px;
  padding: 12px 0 7px 8px;
}
.meta label { align-self: center; padding-top: 2px; }
.meta .mid { padding-left: 33px; }
.meta .last { padding-left: 8px; }
input, select, textarea {
  width: 100%;
  min-width: 0;
  height: 34px;
  margin: 0;
  padding: 0 4px;
  border: 1px solid var(--line);
  border-radius: 0;
  background: #fff;
  color: #000;
  font: inherit;
  white-space: pre;
}
select { appearance: none; padding-left: 8px; }
.picker { position: relative; }
.picker svg { position: absolute; top: 13px; right: 7px; width: 16px; height: 10px; pointer-events: none; }
.filled { background: var(--field); }
.short { width: 199px; }
.tiny { width: 65px; }

.editor { flex: 1; display: flex; flex-direction: column; max-width: 1249px; margin-left: 4px; border: 1px solid var(--line); }
.edit-tools { display: flex; flex-direction: column; gap: 11px; padding: 8px 8px 11px; background: var(--bar); border-bottom: 1px solid var(--line); }
.tool-row { display: flex; gap: 26px; }
.group { display: flex; height: 44px; border: 1px solid var(--line); }
.group button { display: flex; align-items: center; justify-content: center; width: 52px; height: 36px; margin: 3px 0; padding-right: 3px; color: #6f8096; font-size: 28px; line-height: 32px; }
.group button + button { border-left: 1px solid var(--line); }
.group button:last-child { width: 54px; }
.serif { font-family: "Liberation Serif", serif; }
.group .cap { font-size: 36px; }
.group .small { font-size: 28px; padding-top: 8px; }
.group .sans { font: 600 24px/30px "Noto Sans", sans-serif; }
.group .inked { font-size: 28px; text-decoration: underline 4px #5a9e6d; }
.group .bold { font-weight: bold; font-size: 40px; }
.group .italic { font-style: italic; }
.group .under { font-size: 28px; text-decoration: underline 2px; }
.group .strike { font-weight: bold; font-size: 36px; text-decoration: line-through 2px; }

.document { position: relative; flex: 1; padding: 39px 10px 0; font-size: 24px; line-height: 28px; }
.document h4 { font-size: 24px; line-height: 28px; }
.document ul { margin: 24px 0 80px; padding-left: 72px; }
.watermark {
  position: absolute;
  left: 51%;
  top: 53%;
  transform: translate(-50%, -50%) rotate(-51deg);
  font: bold 208px/208px "DejaVu Sans", sans-serif;
  color: #d1d1d1;
}
.page-scroll { padding: 16px 0 9px; }
.page-scroll .thumb { flex: 0 0 93%; margin-top: 8px; }

/* walkthrough markers */
.outline { position: absolute; border: 3px solid #109618; box-shadow: 1px 3px 5px rgba(0, 0, 0, .45), inset 1px 3px 5px rgba(0, 0, 0, .35); pointer-events: none; }
.status-outline { left: 1855px; top: 103px; width: 328px; height: 60px; }
.step {
  position: absolute;
  width: 48px;
  height: 48px;
  border: 1px solid #000;
  border-radius: 24px;
  background: #2d2d2d;
  box-shadow: inset 0 -3px 2px #666;
  color: #fff;
  font: 800 32px/44px "Open Sans", sans-serif;
  text-align: center;
}
.step-3 { left: 2159px; top: 109px; }
.step-5 { left: 1054px; top: 28px; }
.step-4 { left: 794px; top: 553px; }

/* void letter dialog */
.dialog { position: absolute; left: 1869px; top: 284px; width: 995px; padding: 11px 0 0 7px; background: #fff; }
.dialog header { display: flex; align-items: center; justify-content: space-between; width: 979px; height: 33px; padding-left: 9px; border: 1px solid var(--line); background: linear-gradient(#e2eeff, #8bade3); }
.dialog h2 { font-size: 19px; padding-top: 4px; }
.dialog header svg { width: 26px; height: 31px; background: #fcfcfc; }
.dialog-body { margin-left: 1px; padding: 17px 14px 12px 20px; border: 1px solid var(--line); border-top: 0; }
.fields { display: grid; grid-template-columns: 116px 1fr; grid-auto-rows: 34px; row-gap: 11px; }
.fields label { align-self: center; padding-top: 5px; }
.prompt { margin: 31px 0 9px 116px; font: 600 27px/38px "Open Sans", sans-serif; color: #212529; }
.reason { display: grid; grid-template-columns: 116px 1fr; }
.reason label { padding-top: 3px; }
.area { position: relative; height: 116px; }
textarea { display: block; height: 116px; padding: 8px 30px 0 17px; resize: none; overflow: hidden; font: 27px/34px Lato, sans-serif; }
.area-scroll { position: absolute; inset: 1px 1px 1px auto; display: flex; flex-direction: column; align-items: center; justify-content: space-between; width: 25px; padding: 7px 0; background: #fcfcfc; }
.area-scroll svg { width: 15px; height: 13px; }
.actions { display: flex; justify-content: flex-end; gap: 18px; padding: 65px 3px 1px 0; }
.actions button { width: 81px; height: 39px; border: 1px solid #8fa6dd; background: #f4f7ff; color: #6b7fd6; font-family: "Noto Sans", sans-serif; }
.reason-outline { left: 13px; top: 427px; width: 982px; height: 250px; }
```
